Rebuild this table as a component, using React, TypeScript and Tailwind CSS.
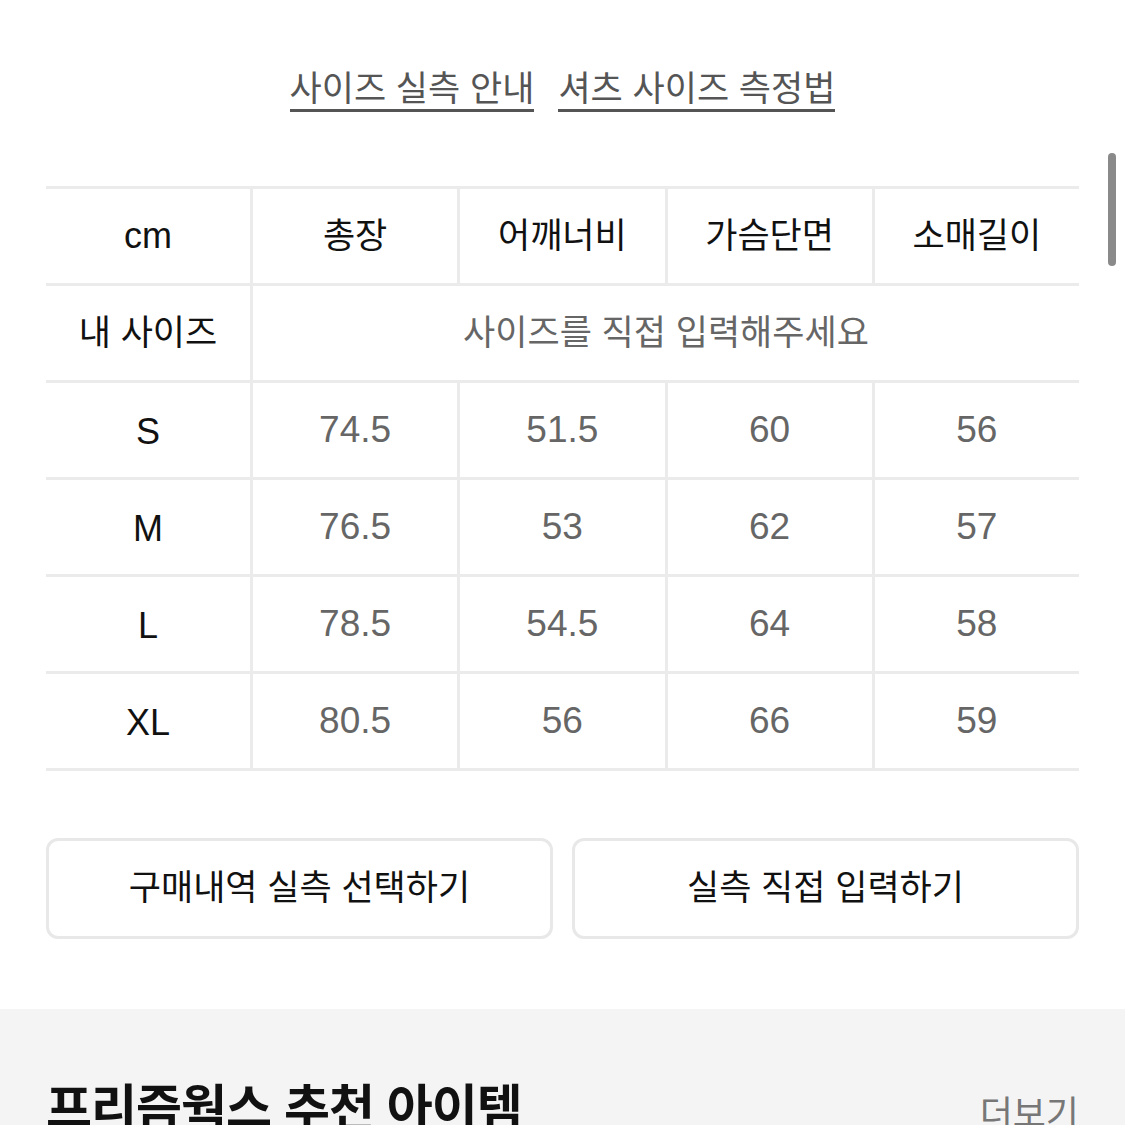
import React from "react";

const font = { fontFamily: '"Liberation Sans", "Noto Sans CJK KR", sans-serif' };

const cols = ["총장", "어깨너비", "가슴단면", "소매길이"];
const rows: [string, string[]][] = [
  ["S", ["74.5", "51.5", "60", "56"]],
  ["M", ["76.5", "53", "62", "57"]],
  ["L", ["78.5", "54.5", "64", "58"]],
  ["XL", ["80.5", "56", "66", "59"]],
];

export default function App() {
  return (
    <div className="relative w-[1125px] h-[1125px] overflow-hidden bg-white" style={font}>
      <div className="px-[46px]">
        <div className="flex justify-center gap-[24px] pt-[68px] text-[35px] leading-[41px] text-[#555]">
          <span className="border-b-[3px] border-[#555]">사이즈 실측 안내</span>
          <span className="border-b-[3px] border-[#555]">셔츠 사이즈 측정법</span>
        </div>

        <div className="mt-[74px] border-t-[3px] border-[#ebebeb]">
          <div className="flex h-[97px] border-b-[3px] border-[#ebebeb] text-[35px] text-[#111]">
            <div className="w-[207px] shrink-0 border-r-[3px] border-[#ebebeb] flex items-center justify-center text-[36px]">cm</div>
            {cols.map((c, i) => (
              <div
                key={c}
                className={`flex-1 flex items-center justify-center ${i < 3 ? "border-r-[3px] border-[#ebebeb]" : ""}`}
              >
                {c}
              </div>
            ))}
          </div>
          <div className="flex h-[97px] border-b-[3px] border-[#ebebeb]">
            <div className="w-[207px] shrink-0 border-r-[3px] border-[#ebebeb] flex items-center justify-center text-[35px] text-[#111]">내 사이즈</div>
            <div className="flex-1 flex items-center justify-center text-[35px] text-[#666]">사이즈를 직접 입력해주세요</div>
          </div>
          {rows.map(([s, vals]) => (
            <div key={s} className="flex h-[97px] border-b-[3px] border-[#ebebeb]">
              <div className="w-[207px] shrink-0 border-r-[3px] border-[#ebebeb] flex items-center justify-center text-[36px] text-[#111] pt-[4px]">{s}</div>
              {vals.map((v, i) => (
                <div
                  key={i}
                  className={`flex-1 flex items-center justify-center text-[37px] text-[#666] ${i < 3 ? "border-r-[3px] border-[#ebebeb]" : ""}`}
                >
                  {v}
                </div>
              ))}
            </div>
          ))}
        </div>

        <div className="mt-[67px] flex gap-[19px]">
          <div className="flex-1 h-[101px] rounded-[12px] border-[3px] border-[#e8e8e8] flex items-center justify-center text-[35px] text-[#111]">구매내역 실측 선택하기</div>
          <div className="flex-1 h-[101px] rounded-[12px] border-[3px] border-[#e8e8e8] flex items-center justify-center text-[35px] text-[#111]">실측 직접 입력하기</div>
        </div>
      </div>

      <div className="mt-[70px] bg-[#f4f4f4] h-[200px] px-[46px] pt-[68px] flex justify-between items-start">
        <div className="text-[50px] font-bold leading-[64px] text-[#111] tracking-[-1px]">프리즘웍스 추천 아이템</div>
        <div className="text-[36px] leading-[60px] text-[#777] pt-[8px]">더보기</div>
      </div>

      <div className="absolute left-[1108px] top-[153px] w-[8px] h-[113px] rounded-full bg-[#8a8a8a]" />
    </div>
  );
}
